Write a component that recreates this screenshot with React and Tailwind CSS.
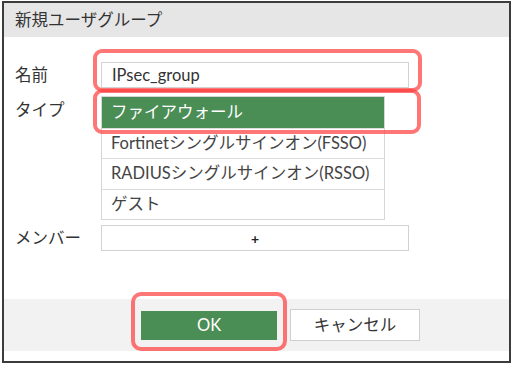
import React from 'react';

const font = "font-['Lato','Noto_Sans_CJK_JP',sans-serif]";

const options = [
  { label: 'ファイアウォール', selected: true },
  { label: 'Fortinetシングルサインオン(FSSO)' },
  { label: 'RADIUSシングルサインオン(RSSO)' },
  { label: 'ゲスト' },
];

const App = () => {
  return (
    <div className={`relative w-[512px] h-[365px] bg-white ${font} text-[#333]`}>
      <div className="ml-[2px] mt-[1px] w-[509px] h-[362px] border-2 border-[#3c3c3c] flex flex-col">
        {/* Header */}
        <div className="h-[34px] bg-[#e6e6e6] flex items-center pl-[11px] text-[16.5px] text-[#333]">
          新規ユーザグループ
        </div>

        {/* Body */}
        <div className="flex-1 flex flex-col pt-[25px]">
          <div className="flex items-center">
            <span className="w-[97px] pl-[11px] text-[16.5px]">名前</span>
            <div className="w-[308px] h-[26px] border border-[#d2d2d2] flex items-center pl-[10px] text-[16.5px] text-[#333]">
              IPsec_group
            </div>
          </div>

          <div className="flex mt-[8px]">
            <span className="w-[97px] pl-[11px] text-[16.5px] pt-[2px]">タイプ</span>
            <div className="w-[284px] border border-[#d6d6d6] flex flex-col">
              {options.map((o, i) => (
                <div
                  key={i}
                  className={`h-[30.5px] flex items-center pl-[9px] text-[16.5px] ${
                    o.selected ? 'bg-[#4a8d55] text-white' : 'text-[#444] border-t border-[#dcdcdc]'
                  }`}
                >
                  {o.label}
                </div>
              ))}
            </div>
          </div>

          <div className="flex items-center mt-[5px]">
            <span className="w-[97px] pl-[11px] text-[16.5px]">メンバー</span>
            <div className="w-[308px] h-[26px] border border-[#d2d2d2] flex items-center justify-center text-[14px] font-bold text-[#222]">
              +
            </div>
          </div>
        </div>

        {/* Footer */}
        <div className="h-[52px] bg-[#f2f2f2] flex items-center pl-[137px] gap-[13px]">
          <button className="w-[136px] h-[29px] bg-[#4a8d55] text-white text-[16.5px] flex items-center justify-center">
            OK
          </button>
          <button className="w-[130px] h-[32px] bg-white border border-[#cfcfcf] text-[#333] text-[16.5px] flex items-center justify-center">
            キャンセル
          </button>
        </div>
        <div className="h-[10px] bg-white"></div>
      </div>

      {/* red highlights */}
      <div className="absolute left-[93px] top-[48px] w-[329px] h-[43px] border-[4px] border-[rgba(255,60,60,0.7)] rounded-[9px]"></div>
      <div className="absolute left-[93px] top-[88px] w-[328px] h-[45px] border-[4px] border-[rgba(255,60,60,0.7)] rounded-[9px]"></div>
      <div className="absolute left-[131px] top-[291px] w-[156px] h-[59px] border-[4px] border-[rgba(255,60,60,0.7)] rounded-[10px]"></div>
    </div>
  );
};

export default App;
